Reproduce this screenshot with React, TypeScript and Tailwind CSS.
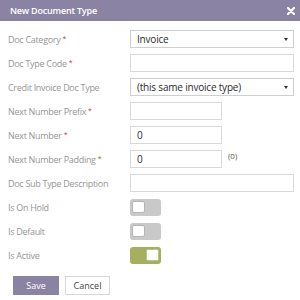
import React from "react";

const font = { fontFamily: '"Open Sans", "Liberation Sans", sans-serif' };

function Label({ text, req }: { text: string; req?: boolean }) {
  return (
    <div className="w-[122px] shrink-0 text-[9px] tracking-[-0.3px] text-[#969696] leading-none">
      {text}
      {req && <span className="text-[#b9473b] text-[7px] align-top ml-[2px]">*</span>}
    </div>
  );
}

function Select({ value }: { value: string }) {
  return (
    <div className="flex-1 h-[18px] border border-[#cfcfcf] flex items-center justify-between pl-[6px] pr-[5px] text-[10px] tracking-[-0.2px] text-[#2b2b2b]">
      <span>{value}</span>
      <span className="w-0 h-0 border-l-[2.5px] border-r-[2.5px] border-t-[3px] border-l-transparent border-r-transparent border-t-[#333]" />
    </div>
  );
}

function Input({ value, wide }: { value?: string; wide?: boolean }) {
  return (
    <div className={(wide ? "flex-1" : "w-[92px]") + " h-[18px] border border-[#d8d8d8] flex items-center pl-[6px] text-[10px] text-[#2b2b2b]"}>
      {value}
    </div>
  );
}

function Toggle({ on }: { on?: boolean }) {
  return (
    <div
      className={
        "w-[31px] h-[17px] rounded-[3px] p-[2px] flex items-center " +
        (on ? "bg-[#a4b060] justify-end" : "bg-[#c9c9c9] justify-start")
      }
    >
      <div className={"w-[13px] h-[12px] rounded-[2px] bg-white border " + (on ? "border-[#bcc58a]" : "border-[#b5b5b5]")} />
    </div>
  );
}

function Row({ children }: { children: React.ReactNode }) {
  return <div className="h-[24px] flex items-center">{children}</div>;
}

export default function App() {
  return (
    <div className="w-[300px] h-[300px] bg-white flex flex-col" style={font}>
      <div className="h-[21px] bg-[#8b83a3] flex items-center justify-between pl-[10px] pr-[4px]">
        <span className="text-white text-[9px] font-semibold tracking-[-0.2px]">New Document Type</span>
        <svg width="8" height="8" viewBox="0 0 8 8" className="mr-[1px]">
          <path d="M1 1 L7 7 M7 1 L1 7" stroke="white" strokeWidth="2.2" strokeLinecap="round" />
        </svg>
      </div>
      <div className="flex flex-col pl-[8px] pr-[6px] pt-[6px]">
        <Row><Label text="Doc Category" req /><Select value="Invoice" /></Row>
        <Row><Label text="Doc Type Code" req /><Input wide /></Row>
        <Row><Label text="Credit Invoice Doc Type" /><Select value="(this same invoice type)" /></Row>
        <Row><Label text="Next Number Prefix" req /><Input /></Row>
        <Row><Label text="Next Number" req /><Input value="0" /></Row>
        <Row>
          <Label text="Next Number Padding" req />
          <Input value="0" />
          <span className="ml-[6px] text-[8px] text-[#555] -mt-[6px]">(0)</span>
        </Row>
        <Row><Label text="Doc Sub Type Description" /><Input wide /></Row>
        <Row><Label text="Is On Hold" /><Toggle /></Row>
        <Row><Label text="Is Default" /><Toggle /></Row>
        <Row><Label text="Is Active" /><Toggle on /></Row>
      </div>
      <div className="flex gap-[6px] pl-[13px] mt-[9px]">
        <button className="w-[46px] h-[19px] bg-[#8b83a3] text-white text-[9px]">Save</button>
        <button className="w-[45px] h-[19px] border border-[#d8d8d8] text-[#444] text-[9px]">Cancel</button>
      </div>
    </div>
  );
}
